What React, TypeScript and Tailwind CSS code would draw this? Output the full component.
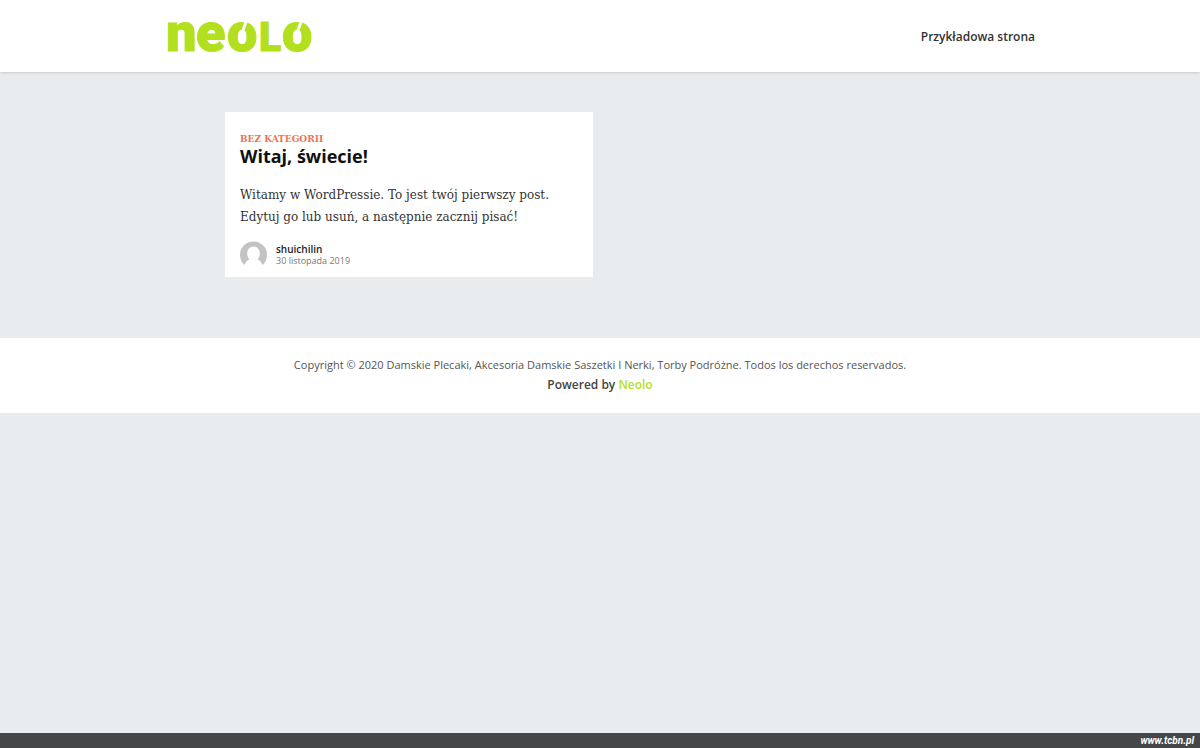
import React from 'react';

interface Post {
  category: string;
  title: string;
  excerpt: string;
  author: string;
  date: string;
}

const posts: Post[] = [
  {
    category: 'BEZ KATEGORII',
    title: 'Witaj, świecie!',
    excerpt: 'Witamy w WordPressie. To jest twój pierwszy post. Edytuj go lub usuń, a następnie zacznij pisać!',
    author: 'shuichilin',
    date: '30 listopada 2019'
  }
];

const Logo: React.FC = () => (
  <svg viewBox="0 0 150 72" className="block h-[72px] w-[150px]" role="img" aria-label="Neolo">
    <g
      fill="#b2e01e"
      stroke="#b2e01e"
      strokeWidth="1"
      strokeLinejoin="round"
      fontFamily="Roboto, sans-serif"
      fontWeight="900"
      fontSize="54"
    >
      <text x="1" y="51">n</text>
      <text x="31" y="51">e</text>
      <text x="62" y="51">o</text>
      <text x="94" y="51" fontSize="41">L</text>
      <text x="117" y="51">o</text>
    </g>
    {/* slits that open the top of both o's */}
    <path d="M82 19 L77 33 M137 19 L132 33" stroke="#fff" strokeWidth="3" fill="none" />
  </svg>
);

const Avatar: React.FC = () => (
  <svg viewBox="0 0 27 27" className="h-[27px] w-[27px]" aria-hidden="true">
    <path
      d="M4.5 24 A13.5 13.5 0 1 1 22.5 24 C21.5 21.5 20 19.5 17.5 18.3 C19 17 19.8 15 19.8 12.5 C19.8 8.5 17.3 5.5 13.5 5.5 C9.7 5.5 7.2 8.5 7.2 12.5 C7.2 15 8 17 9.5 18.3 C7 19.5 5.5 21.5 4.5 24 Z"
      fill="#c3c3c3"
    />
  </svg>
);

const PostCard: React.FC<{ post: Post }> = ({ post }) => (
  <article className="bg-white px-[15px] pt-[21px] pb-[9px]">
    <a href="#" className="block font-['DejaVu_Serif',serif] text-[9px] leading-3 font-bold text-[#ee7350]">
      {post.category}
    </a>
    <h2 className="text-lg leading-[22px] font-bold text-[#111]">
      <a href="#">{post.title}</a>
    </h2>
    <p className="mt-[17px] font-['DejaVu_Serif',serif] text-xs leading-[22px] text-[#333]">{post.excerpt}</p>
    <div className="mt-[13px] flex items-center gap-[9px]">
      <Avatar />
      <div className="pt-px">
        <a href="#" className="block text-[10px] leading-3 font-semibold text-[#222]">{post.author}</a>
        <time className="block text-[9px] leading-3 text-[#777]">{post.date}</time>
      </div>
    </div>
  </article>
);

export default function App() {
  return (
    <div className="flex min-h-screen flex-col bg-[#e8ecef] font-['Open_Sans',sans-serif]">
      <header className="bg-white shadow">
        <div className="mx-auto flex h-[72px] max-w-[900px] items-center justify-between px-[15px]">
          <a href="#">
            <Logo />
          </a>
          <nav className="pb-0.5">
            <a href="#" className="text-xs font-semibold text-[#333]">Przykładowa strona</a>
          </nav>
        </div>
      </header>

      <main className="mx-auto grid w-full max-w-[780px] grid-cols-2 gap-[15px] px-[15px] pt-10 pb-[61px]">
        {posts.map((post) => (
          <PostCard key={post.title} post={post} />
        ))}
      </main>

      <footer className="bg-white px-4 pt-[17px] pb-[18px] text-center">
        <p className="text-[11px] leading-5 text-[#555]">
          Copyright © 2020 Damskie Plecaki, Akcesoria Damskie Saszetki I Nerki, Torby Podróżne. Todos los derechos reservados.
        </p>
        <p className="text-xs leading-5 font-semibold text-[#444]">
          Powered by <a href="#" className="text-[#b2e01e]">Neolo</a>
        </p>
      </footer>

      <div className="mt-auto bg-[#454648] px-[6px] text-right font-[Roboto,sans-serif] text-[10px] leading-[15px] font-bold text-white italic">
        www.tcbn.pl
      </div>
    </div>
  );
}
